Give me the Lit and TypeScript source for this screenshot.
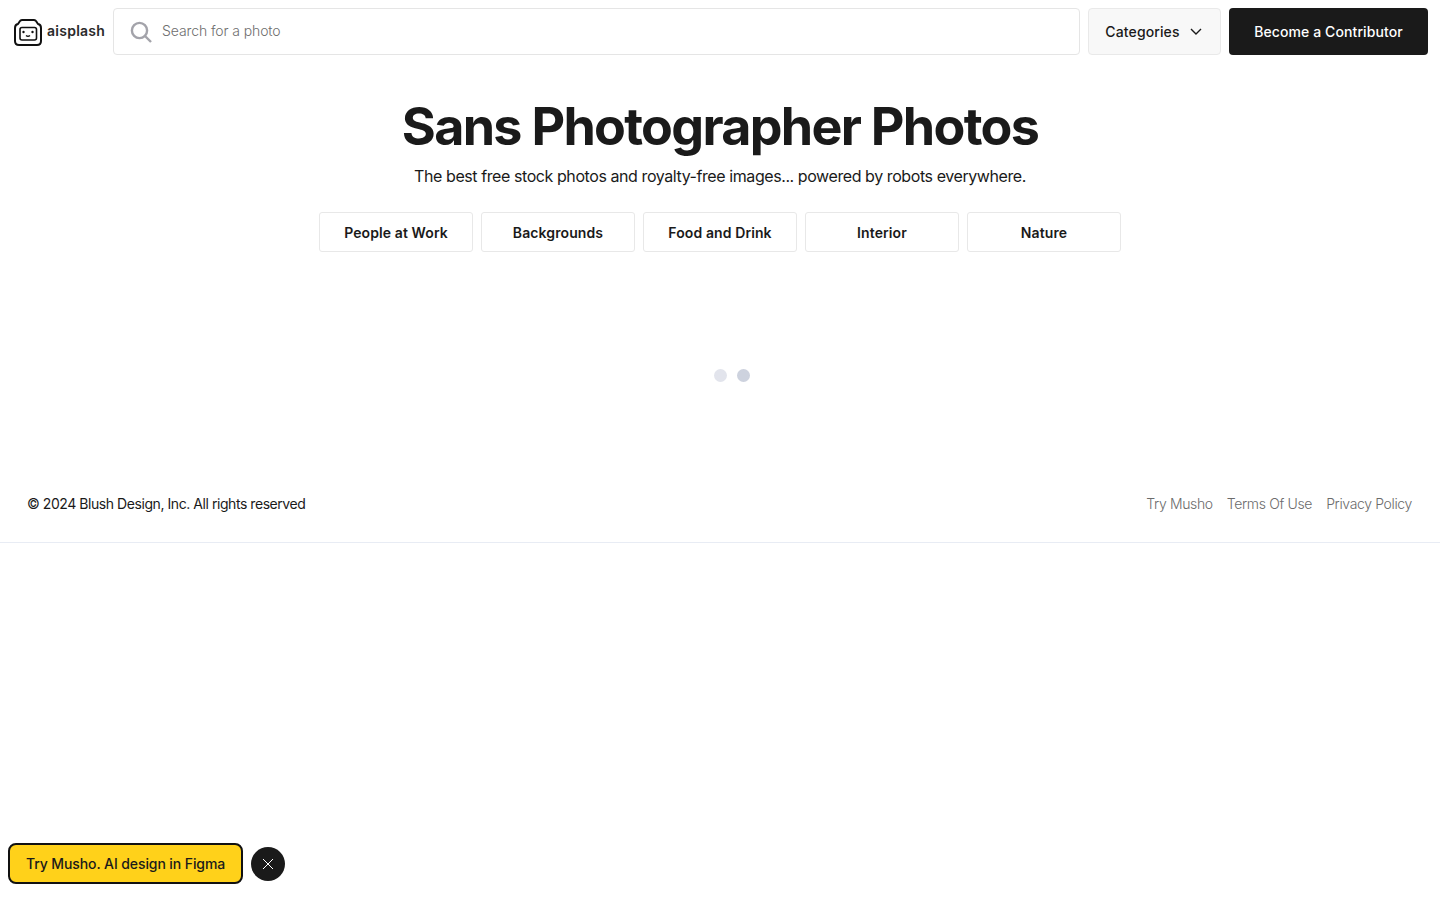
import { LitElement, html, css } from "lit";
import { customElement } from "lit/decorators.js";

@customElement("app-root")
export class AppRoot extends LitElement {
  static styles = css`
    :host { display: block; height: 900px; background: #fff; font-family: "Inter", "Noto Sans", sans-serif; color: #1a1a1a; position: relative; overflow: hidden; }
    .top { display: flex; align-items: stretch; gap: 8px; padding: 8px 12px 0 14px; height: 47px; }
    .logo { width: 91px; display: flex; align-items: center; gap: 5px; font-size: 14px; font-weight: 600; letter-spacing: 0.25px; color: #2a2a2a; box-sizing: border-box; }
    .logo svg { margin-top: 1px; flex: none; }
    .logo span { padding-bottom: 2px; }
    .search { flex: 1; display: flex; align-items: center; gap: 10px; border: 1px solid #e5e5e5; border-radius: 4px; padding: 0 16px 2px; font-size: 14px; font-weight: 300; letter-spacing: -0.1px; color: #6e6e6e; }
    .search svg { margin-top: 2px; }
    .cat { width: 133px; box-sizing: border-box; background: #f8f8f8; border: 1px solid #e9e9e9; border-radius: 4px; display: flex; align-items: center; justify-content: center; gap: 10px; font-size: 14px; font-weight: 500; letter-spacing: 0.12px; padding-right: 2px; }
    .cta { width: 199px; background: #1a1a1a; color: #fff; border-radius: 4px; display: flex; align-items: center; justify-content: center; font-size: 14px; font-weight: 500; letter-spacing: 0.1px; }
    .hero { display: flex; flex-direction: column; align-items: center; padding-top: 41px; }
    h1 { margin: 0; font-size: 52px; line-height: 62px; font-weight: 700; letter-spacing: -1.7px; }
    .sub { font-size: 16px; line-height: 24px; margin-top: 6px; letter-spacing: -0.42px; font-weight: 400; }
    .chips { display: flex; gap: 8px; margin-top: 24px; }
    .chip { width: 154px; height: 40px; box-sizing: border-box; border: 1px solid #e8e8e8; border-radius: 3px; display: flex; align-items: center; justify-content: center; font-size: 14px; font-weight: 600; letter-spacing: 0.1px; }
    .dots { display: flex; gap: 10px; justify-content: center; margin: 117px 0 0 23px; }
    .dot { width: 13px; height: 13px; border-radius: 50%; background: #e2e4ec; }
    .dot.b { background: #cdd2de; }
    .foot { display: flex; justify-content: space-between; align-items: center; padding: 0 28px 26px 27px; margin-top: 108px; height: 26px; border-bottom: 1px solid #e8ecf4; font-size: 14px; box-sizing: content-box; letter-spacing: -0.44px; }
    .links { display: flex; gap: 14px; color: #6b6b6b; font-weight: 300; letter-spacing: -0.35px; }
    .promo { position: absolute; left: 8px; bottom: 16px; display: flex; align-items: center; gap: 8px; }
    .pill { height: 37px; padding: 0 16px; background: #ffd11a; border: 2px solid #111; border-radius: 8px; display: flex; align-items: center; font-size: 14px; font-weight: 500; letter-spacing: -0.1px; }
    .close { width: 34px; height: 34px; border-radius: 50%; background: #1a1a1a; display: flex; align-items: center; justify-content: center; }
  `;
  render() {
    return html`
      <div class="top">
        <div class="logo">
          <svg width="28" height="28" viewBox="0 0 28 28" fill="none" stroke="#111"><path stroke-width="2" stroke-linejoin="round" d="M4 6 L6 3 Q6.5 2 8 2 H20 Q21.5 2 22 3 L24 6 Q27 6.5 27 10 V23 Q27 27 23 27 H5 Q1 27 1 23 V10 Q1 6.5 4 6 Z"/><rect x="6" y="9.5" width="16.5" height="12.5" rx="2" stroke-width="1.6"/><circle cx="9.5" cy="14" r="1.2" fill="#111" stroke="none"/><circle cx="18.5" cy="14" r="1.2" fill="#111" stroke="none"/><path d="M12 17.5q2 1.6 4 0" stroke-width="1.4"/></svg>
          <span>aisplash</span>
        </div>
        <div class="search">
          <svg width="22" height="22" viewBox="0 0 22 22" fill="none" stroke="#a3a3aa" stroke-width="2.4"><circle cx="9.5" cy="9.5" r="7.6"/><path d="M15 15l6 6"/></svg>
          Search for a photo
        </div>
        <div class="cat">Categories <svg width="12" height="7" viewBox="0 0 12 7" fill="none" stroke="#1a1a1a" stroke-width="1.4"><path d="M1 1l5 5 5-5"/></svg></div>
        <div class="cta">Become a Contributor</div>
      </div>
      <div class="hero">
        <h1>Sans Photographer Photos</h1>
        <div class="sub">The best free stock photos and royalty-free images... powered by robots everywhere.</div>
        <div class="chips">
          ${["People at Work","Backgrounds","Food and Drink","Interior","Nature"].map(c => html`<div class="chip">${c}</div>`)}
        </div>
      </div>
      <div class="dots"><span class="dot"></span><span class="dot b"></span></div>
      <div class="foot">
        <span>© 2024 Blush Design, Inc. All rights reserved</span>
        <div class="links"><span>Try Musho</span><span>Terms Of Use</span><span>Privacy Policy</span></div>
      </div>
      <div class="promo">
        <div class="pill">Try Musho. AI design in Figma</div>
        <div class="close"><svg width="10" height="10" viewBox="0 0 10 10" stroke="#fff" stroke-width="1"><path d="M0 0l10 10M10 0L0 10"/></svg></div>
      </div>
    `;
  }
}
